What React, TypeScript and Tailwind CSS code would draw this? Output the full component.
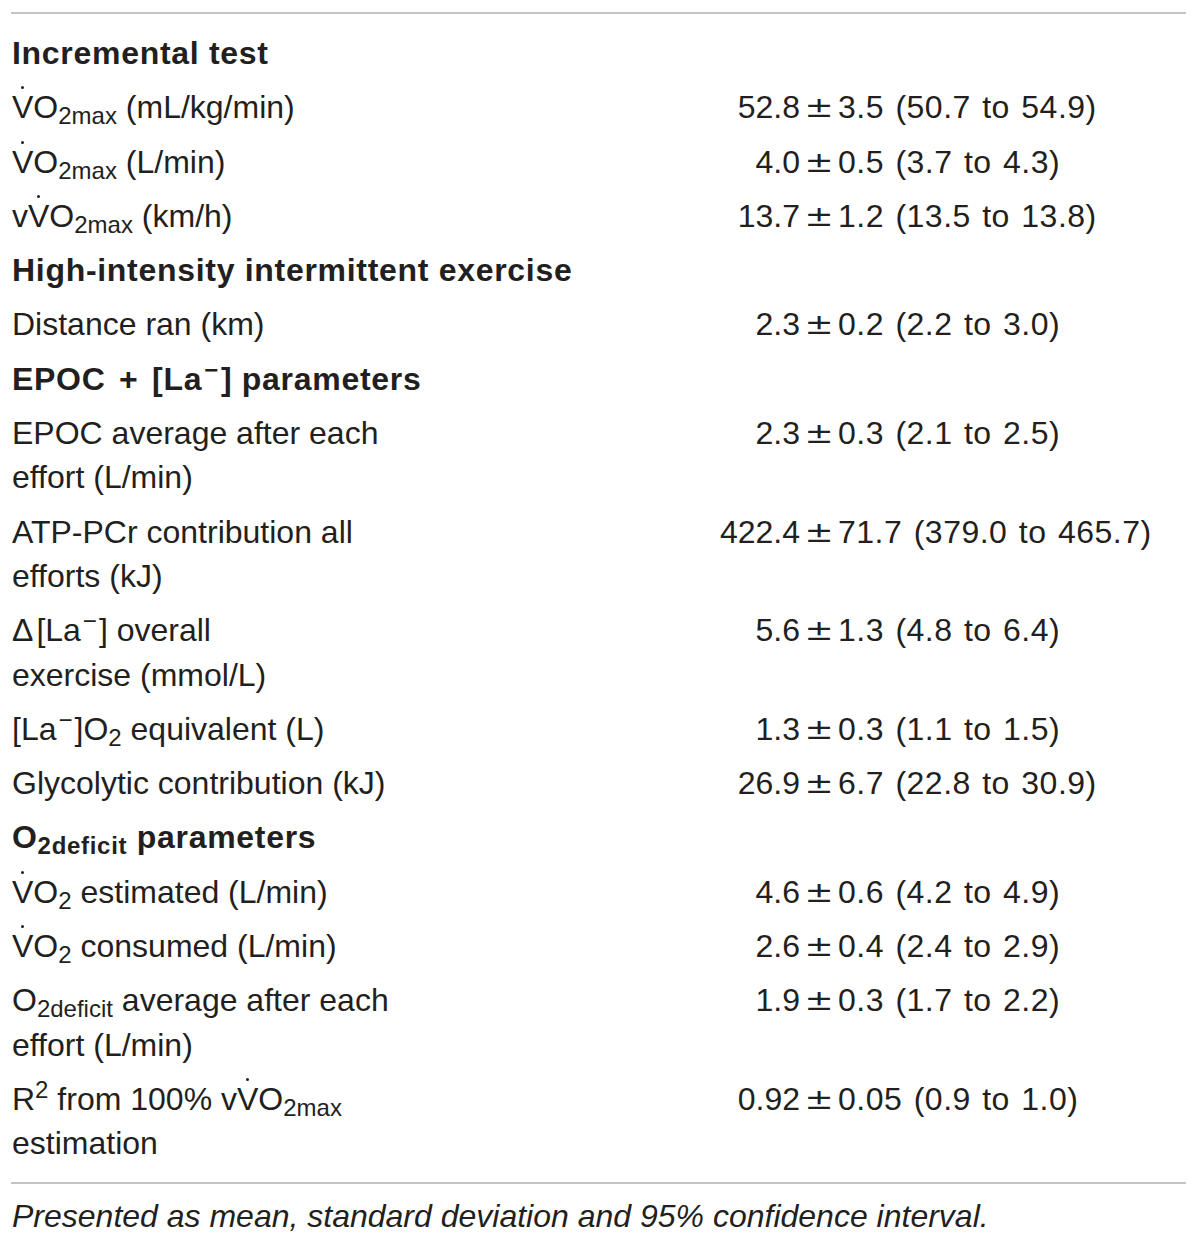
import type { ReactNode } from 'react';

type Row =
  | { kind: 'head'; label: ReactNode }
  | { kind: 'data'; label: ReactNode; mean: string; rest: string };

function Vdot() {
  return (
    <span className="relative">
      V
      <span className="absolute left-[9px] top-[-3px] w-[3px] h-[3px] rounded-full bg-current" />
    </span>
  );
}

const La = (
  <>
    [La<sup className="mx-[2px]">−</sup>]
  </>
);

const rows: Row[] = [
  { kind: 'head', label: 'Incremental test' },
  { kind: 'data', label: <><Vdot />O<sub>2max</sub> (mL/kg/min)</>, mean: '52.8', rest: '3.5 (50.7 to 54.9)' },
  { kind: 'data', label: <><Vdot />O<sub>2max</sub> (L/min)</>, mean: '4.0', rest: '0.5 (3.7 to 4.3)' },
  { kind: 'data', label: <>v<Vdot />O<sub>2max</sub> (km/h)</>, mean: '13.7', rest: '1.2 (13.5 to 13.8)' },
  { kind: 'head', label: 'High-intensity intermittent exercise' },
  { kind: 'data', label: 'Distance ran (km)', mean: '2.3', rest: '0.2 (2.2 to 3.0)' },
  { kind: 'head', label: <>EPOC <span className="px-[4px]">+</span> {La} parameters</> },
  { kind: 'data', label: <>EPOC average after each<br />effort (L/min)</>, mean: '2.3', rest: '0.3 (2.1 to 2.5)' },
  { kind: 'data', label: <>ATP-PCr contribution all<br />efforts (kJ)</>, mean: '422.4', rest: '71.7 (379.0 to 465.7)' },
  { kind: 'data', label: <>Δ<span className="pl-[3px]" />{La} overall<br />exercise (mmol/L)</>, mean: '5.6', rest: '1.3 (4.8 to 6.4)' },
  { kind: 'data', label: <>{La}O<sub>2</sub> equivalent (L)</>, mean: '1.3', rest: '0.3 (1.1 to 1.5)' },
  { kind: 'data', label: 'Glycolytic contribution (kJ)', mean: '26.9', rest: '6.7 (22.8 to 30.9)' },
  { kind: 'head', label: <>O<sub>2deficit</sub> parameters</> },
  { kind: 'data', label: <><Vdot />O<sub>2</sub> estimated (L/min)</>, mean: '4.6', rest: '0.6 (4.2 to 4.9)' },
  { kind: 'data', label: <><Vdot />O<sub>2</sub> consumed (L/min)</>, mean: '2.6', rest: '0.4 (2.4 to 2.9)' },
  { kind: 'data', label: <>O<sub>2deficit</sub> average after each<br />effort (L/min)</>, mean: '1.9', rest: '0.3 (1.7 to 2.2)' },
  { kind: 'data', label: <>R<sup>2</sup> from 100% v<Vdot />O<sub>2max</sub><br />estimation</>, mean: '0.92', rest: '0.05 (0.9 to 1.0)' },
];

export default function App() {
  return (
    <div className="w-[1200px] h-[1245px] bg-white text-[#231f20] font-['Liberation_Sans',Arial,sans-serif] text-[32px] leading-[44.3px]">
      <div className="mx-[11px] pt-[12px] w-[1175px]">
        <div className="h-[2px] bg-[#c4c4c4]" />
        <div className="pt-[12px] pb-[11px]">
          {rows.map((row, i) =>
            row.kind === 'head' ? (
              <div key={i} className="py-[5px] pl-[1px] font-bold tracking-[0.7px]">
                {row.label}
              </div>
            ) : (
              <div key={i} className="flex items-start py-[5px]">
                <div className="w-[390px] pl-[1px]">{row.label}</div>
                <div className="w-[399px] text-right">{row.mean}</div>
                <div className="w-[38px] text-center font-['DejaVu_Sans',sans-serif] text-[29px]">
                  <span className="inline-block scale-x-[1.2]">±</span>
                </div>
                <div className="flex-1 [word-spacing:2px] tracking-[0.5px]">{row.rest}</div>
              </div>
            )
          )}
        </div>
        <div className="h-[2px] bg-[#c4c4c4]" />
        <p className="pt-[10px] pl-[1px] italic">
          Presented as mean, standard deviation and 95% confidence interval.
        </p>
      </div>
    </div>
  );
}
